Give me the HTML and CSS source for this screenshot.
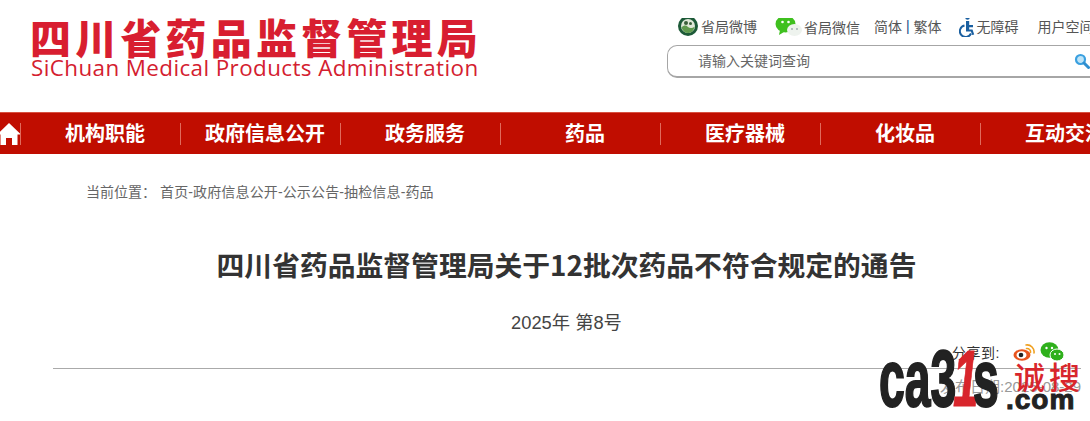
FILE: index.html
```html
<!DOCTYPE html>
<html lang="zh-CN">
<head>
<meta charset="utf-8">
<title>四川省药品监督管理局</title>
<link rel="stylesheet" href="styles.css">
</head>
<body>
<header class="header">
  <div class="logo">
    <div class="logo-cn">四川省药品监督管理局</div>
    <div class="logo-en">SiChuan Medical Products Administration</div>
  </div>
  <div class="tools">
    <div class="links">
      <span class="link link-weibo">
        <svg class="ic-gov" viewBox="0 0 20 20"><circle cx="10" cy="10" r="10" fill="#1d5a38"/><circle cx="10" cy="10" r="7" fill="#dfe8d8"/><path d="M3.500 11.500C6 9 8 9 10 11s5 1 6.500-.5C16 15 13 17 10 17s-5.500-2-6.500-5.500z" fill="#5f9a4e"/><circle cx="8" cy="7" r="2" fill="#3a5f3a"/><circle cx="12.500" cy="7.500" r="1.500" fill="#3a5f3a"/></svg>省局微博</span>
      <span class="link link-wechat">
        <svg class="ic-wechat" viewBox="0 0 28 22"><ellipse cx="10.500" cy="9" rx="10" ry="8.500" fill="#3fc01f"/><path d="M5 15l-1 5 5-3z" fill="#3fc01f"/><circle cx="7.500" cy="7" r="1.300" fill="#fff"/><circle cx="13.500" cy="7" r="1.300" fill="#fff"/><ellipse cx="19.500" cy="15" rx="7.500" ry="6" fill="#eef3ee"/><circle cx="17" cy="14" r=".9" fill="#9aa"/><circle cx="22" cy="14" r=".9" fill="#9aa"/></svg><span class="wechat-label">省局微信</span></span>
      <span class="link link-lang">简体 <b class="bar">|</b> 繁体</span>
      <span class="link link-access">
        <svg class="ic-access" viewBox="0 0 16 22"><circle cx="8.500" cy="2.500" r="2.300" fill="#1a5fa0"/><path d="M7 6h3.200v4H14v2.200h-3.800v2.300h3.300l1.700 5-2 .6-1.300-3.500H7z" fill="#1a5fa0"/><path d="M5.500 10.500a5.800 5.800 0 1 0 6.500 8" fill="none" stroke="#1a5fa0" stroke-width="2"/></svg>无障碍</span>
      <span class="link link-user">用户空间</span>
    </div>
    <div class="search">
      <span class="search-hint">请输入关键词查询</span>
      <svg class="ic-search" viewBox="0 0 16 16"><circle cx="6.500" cy="6.500" r="4.500" fill="#bfe4f7" stroke="#3aa0e0" stroke-width="2.200"/><path d="M10 10l4.500 4.500" stroke="#2f8fd0" stroke-width="3" stroke-linecap="round"/></svg>
    </div>
  </div>
</header>
<nav class="nav">
  <div class="nav-home">
    <svg class="ic-home" viewBox="0 0 24 22"><path d="M12 0L0 11.500h3.500V22H9v-7h6v7h5.500V11.500H24z" fill="#fff"/></svg>
  </div>
  <a class="nav-item">机构职能</a>
  <a class="nav-item">政府信息公开</a>
  <a class="nav-item">政务服务</a>
  <a class="nav-item">药品</a>
  <a class="nav-item">医疗器械</a>
  <a class="nav-item">化妆品</a>
  <a class="nav-item">互动交流</a>
</nav>
<div class="crumbs"><span class="crumbs-label">当前位置：</span><span class="crumbs-path">首页-政府信息公开-公示公告-抽检信息-药品</span></div>
<main class="article">
  <h1 class="title">四川省药品监督管理局关于12批次药品不符合规定的通告</h1>
  <p class="docno">2025年 第8号</p>
  <div class="share">
    <span class="share-label">分享到:</span>
    <svg class="ic-weibo" viewBox="0 0 22 18"><ellipse cx="9" cy="12" rx="8.500" ry="5.800" fill="#e8541e"/><ellipse cx="8.500" cy="12" rx="5" ry="3.800" fill="#fff"/><circle cx="8" cy="12" r="2.300" fill="#222"/><path d="M13 2a7 7 0 0 1 8 8M13.500 5.500a3.500 3.500 0 0 1 4 4" fill="none" stroke="#f0a020" stroke-width="1.600" stroke-linecap="round"/></svg>
    <svg class="ic-wx" viewBox="0 0 24 20"><ellipse cx="9.500" cy="8" rx="9" ry="7.800" fill="#2fb01c"/><ellipse cx="17" cy="13" rx="7" ry="6" fill="#2fb01c" stroke="#fff" stroke-width="1"/><circle cx="6.500" cy="6" r="1.200" fill="#fff"/><circle cx="12" cy="6" r="1.200" fill="#fff"/><circle cx="15" cy="12" r="1" fill="#fff"/><circle cx="19.500" cy="12" r="1" fill="#fff"/></svg>
  </div>
  <div class="rule"></div>
  <div class="date">发布日期:2025-08-29</div>
</main>
<div class="watermark">
  <span class="wm-main">ca3<b class="wm-one">1</b>s</span>
  <span class="wm-cn">诚搜</span>
  <span class="wm-com">.com</span>
</div>
</body>
</html>
```
FILE: styles.css
```css
* { box-sizing: border-box; }
html, body { margin: 0; padding: 0; }
body {
  width: 1090px;
  height: 421px;
  overflow: hidden;
  position: relative;
  background: #fff;
  font-family: "Liberation Sans", "Noto Sans CJK SC", sans-serif;
  color: #333;
}
.header {
  height: 112px;
  display: flex;
  justify-content: space-between;
  padding: 18px 0 0 30px;
}
.logo-cn {
  font-family: "Noto Sans CJK SC", sans-serif;
  font-weight: 900;
  font-size: 41px;
  line-height: 40px;
  letter-spacing: 4.200px;
  width: 450px;
  color: #d81e30;
  white-space: nowrap;
  margin-top: -2px;
}
.logo-en {
  font-family: "Open Sans", "Noto Sans", sans-serif;
  font-size: 22.400px;
  letter-spacing: .41px;
  line-height: 24px;
  color: #d4202f;
  white-space: nowrap;
  margin-left: 1px;
}
.tools {
  width: 423px;
  flex: none;
  display: flex;
  flex-direction: column;
  overflow: hidden;
}
.links {
  display: flex;
  align-items: center;
  height: 20px;
  font-size: 14px;
  color: #555;
  white-space: nowrap;
  margin-left: 11px;
  margin-top: -2px;
}
.link { display: flex; align-items: center; }
.ic-gov { width: 20px; height: 20px; margin-right: 3px; }
.ic-wechat { width: 28px; height: 22px; margin-left: 18px; margin-right: 1px; }
.wechat-label { margin-top: 2px; }
.link-lang { margin-left: 14px; white-space: pre; }
.bar { color: #1a4f8a; font-weight: 400; }
.ic-access { width: 16px; height: 22px; margin-left: 18px; margin-right: 1px; }
.link-user { margin-left: 19px; }
.search {
  width: 440px;
  height: 33px;
  margin-top: 9px;
  border: 1px solid #a6a6a6;
  border-bottom-width: 2px;
  border-radius: 10px;
  display: flex;
  align-items: center;
  padding: 0 0 2px 30px;
  position: relative;
}
.search-hint { font-size: 14px; color: #666; }
.ic-search { width: 16px; height: 16px; position: absolute; left: 406px; top: 7px; }
.nav {
  height: 42px;
  background: #c00d00;
  border-top: 1px solid #d85040;
  display: flex;
  align-items: center;
  overflow: hidden;
}
.nav-home {
  width: 20px;
  flex: none;
  display: flex;
  align-items: center;
  height: 22px;
}
.ic-home { width: 24px; height: 22px; margin-left: -3px; flex: none; }
.nav-item {
  flex: none;
  width: 160px;
  height: 22px;
  line-height: 20px;
  padding-left: 9px;
  text-align: center;
  color: #fff;
  font-size: 20px;
  font-family: "Noto Sans CJK SC", sans-serif;
  font-weight: 700;
  border-left: 1px solid #e06a5c;
  white-space: nowrap;
}
.crumbs {
  padding-left: 86px;
  margin-top: 28px;
  height: 20px;
  line-height: 20px;
  font-size: 14px;
  color: #666;
  white-space: nowrap;
}
.crumbs-label { display: inline-block; width: 74px; }
.crumbs-path { letter-spacing: .14px; }
.title {
  margin: 44px 0 0;
  text-align: center;
  font-family: "Noto Sans CJK SC", sans-serif;
  font-size: 27.800px;
  line-height: 36px;
  font-weight: 700;
  color: #333;
  padding-left: 43px;
}
.docno {
  margin: 29px 0 0;
  text-align: center;
  font-size: 18.300px;
  line-height: 24px;
  color: #444;
  padding-left: 43px;
}
.share {
  display: flex;
  align-items: center;
  justify-content: flex-end;
  font-size: 14px;
  color: #333;
  height: 20px;
  margin-top: 7px;
  padding-right: 26px;
}
.share-label { letter-spacing: .5px; }
.ic-weibo { width: 22px; height: 18px; margin-left: 13px; }
.ic-wx { width: 24px; height: 20px; margin-left: 5px; }
.rule {
  height: 1px;
  background: #aaa;
  margin: 6px 9px 0 53px;
}
.date {
  text-align: right;
  padding-right: 9px;
  margin-top: 8px;
  font-size: 15px;
  line-height: 20px;
  color: #999;
  white-space: nowrap;
}
.watermark {
  position: absolute;
  left: 0;
  top: 0;
  width: 1090px;
  height: 421px;
  pointer-events: none;
}
.wm-main {
  position: absolute;
  left: 879px;
  top: 339px;
  font-family: "Liberation Sans", sans-serif;
  font-weight: 700;
  font-size: 80px;
  line-height: 80px;
  color: #222;
  -webkit-text-stroke: 2px #222;
  white-space: nowrap;
  transform: scaleX(.58);
  transform-origin: left top;
}
.wm-one {
  color: #d8262c;
  -webkit-text-stroke: 1px #d8262c;
  font-style: italic;
  letter-spacing: -10px;
  margin-left: -6px;
}
.wm-cn {
  position: absolute;
  left: 1014px;
  top: 358px;
  font-family: "Noto Sans CJK SC", sans-serif;
  font-size: 31px;
  line-height: 36px;
  color: #d8262c;
  letter-spacing: 4px;
  font-weight: 500;
  white-space: nowrap;
}
.wm-com {
  position: absolute;
  left: 1006px;
  top: 385px;
  font-family: "Liberation Sans", sans-serif;
  font-weight: 700;
  font-size: 28px;
  line-height: 30px;
  color: #222;
  -webkit-text-stroke: 1px #222;
  letter-spacing: 1px;
  white-space: nowrap;
}
```
